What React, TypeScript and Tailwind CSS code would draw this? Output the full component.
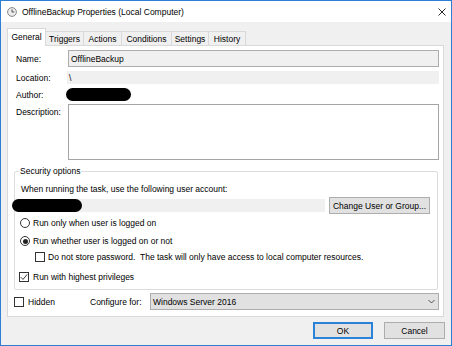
import React from "react";

const TABS = [
  { label: "General", w: "w-[39px]" },
  { label: "Triggers", w: "w-[38px]" },
  { label: "Actions", w: "w-[38px]" },
  { label: "Conditions", w: "w-[50px]" },
  { label: "Settings", w: "w-[37px]" },
  { label: "History", w: "w-[37px]" },
];

function Check({ checked = false }: { checked?: boolean }) {
  return (
    <span className="flex h-[10px] w-[10px] shrink-0 items-center justify-center border border-[#333] bg-white">
      {checked && (
        <svg width="8" height="8" viewBox="0 0 8 8">
          <polyline points="0.8,4.2 3,6.4 7.2,1.4" fill="none" stroke="#222" strokeWidth="0.9" />
        </svg>
      )}
    </span>
  );
}

function Radio({ checked = false }: { checked?: boolean }) {
  return (
    <span className="flex h-[10px] w-[10px] shrink-0 items-center justify-center rounded-full border border-[#333] bg-white">
      {checked && <span className="h-[5px] w-[5px] rounded-full bg-[#222]" />}
    </span>
  );
}

function TaskIcon() {
  return (
    <svg width="10" height="10" viewBox="0 0 10 10">
      <circle cx="5" cy="5" r="4.4" fill="#ececec" stroke="#7a7a7a" strokeWidth="0.9" />
      <path d="M5 2.4 V5 H7.2" fill="none" stroke="#444" strokeWidth="0.9" />
    </svg>
  );
}

export default function App() {
  return (
    <div className="flex h-[346px] w-[452px] flex-col border border-[#2b80d6] bg-[#f0f0f0] font-['Liberation_Sans',Arial,sans-serif] text-[8.5px] leading-[10px] text-black">
      {/* Title bar */}
      <div className="flex h-[21px] shrink-0 items-center bg-white pl-[6px] pr-[5px]">
        <TaskIcon />
        <span className="ml-[5px]">OfflineBackup Properties (Local Computer)</span>
        <svg className="ml-auto" width="8" height="8" viewBox="0 0 8 8">
          <path d="M0.5 0.5 L7.5 7.5 M7.5 0.5 L0.5 7.5" stroke="#111" strokeWidth="0.9" />
        </svg>
      </div>

      {/* Tabs */}
      <div className="mt-[6px] flex h-[17px] items-end pl-[6px]">
        {TABS.map((t, i) =>
          i === 0 ? (
            <div
              key={t.label}
              className={`relative z-10 mb-[-1px] flex h-[18px] ${t.w} items-center justify-center border border-b-0 border-[#d9d9d9] bg-white pb-[2px]`}
            >
              {t.label}
            </div>
          ) : (
            <div
              key={t.label}
              className={`flex h-[14px] ${t.w} items-center justify-center border-t border-r border-[#d9d9d9] bg-[#f0f0f0]`}
            >
              {t.label}
            </div>
          )
        )}
      </div>

      {/* Panel */}
      <div className="ml-[6px] flex h-[272px] w-[437px] shrink-0 flex-col border border-[#d9d9d9] bg-white">
        <div className="ml-[8px] mt-[4px] grid grid-cols-[52px_371px] gap-y-[4px]">
          <span className="self-center">Name:</span>
          <div className="flex h-[17px] items-center border border-[#adadad] bg-[#f0f0f0] pl-[2px]">OfflineBackup</div>

          <span className="self-center">Location:</span>
          <div className="-ml-px flex h-[13px] items-center bg-[#f0f0f0] pl-[2px]">\</div>

          <span className="self-center">Author:</span>
          <div className="flex h-[13px] items-center">
            <span className="-ml-[2px] h-[13px] w-[65px] rounded-full bg-black" />
          </div>

          <span className="-mt-px pt-[3px]">Description:</span>
          <div className="-mt-px h-[56px] border border-[#a5a5a5] bg-white" />
        </div>

        {/* Security options */}
        <fieldset className="ml-[6px] mt-[6px] w-[424px] rounded-[2px] border border-[#dcdcdc] pb-[7px]">
          <legend className="ml-[4px] px-[1px] leading-[10px]">Security options</legend>
          <div className="ml-[6px] mt-[8px]">When running the task, use the following user account:</div>
          <div className="mt-[3px] flex h-[17px] items-center">
            <div className="ml-[6px] flex h-[13px] w-[304px] items-center bg-[#f0f0f0]">
              <span className="-ml-[9px] h-[13px] w-[70px] rounded-full bg-black" />
            </div>
            <div className="ml-[4px] flex h-[17px] w-[101px] items-center justify-center border border-[#adadad] bg-[#e1e1e1]">
              Change User or Group...
            </div>
          </div>
          <label className="ml-[5px] mt-[4px] flex items-center gap-[3px]">
            <Radio />
            <span>Run only when user is logged on</span>
          </label>
          <label className="ml-[5px] mt-[8px] flex items-center gap-[3px]">
            <Radio checked />
            <span>Run whether user is logged on or not</span>
          </label>
          <label className="ml-[20px] mt-[6px] flex items-center gap-[3px]">
            <Check />
            <span>Do not store password.&nbsp; The task will only have access to local computer resources.</span>
          </label>
          <label className="ml-[4px] mt-[10px] flex items-center gap-[4px]">
            <Check checked />
            <span>Run with highest privileges</span>
          </label>
        </fieldset>

        {/* Hidden / Configure for */}
        <div className="ml-[6px] mt-[3px] flex h-[17px] items-center">
          <label className="flex w-[76px] items-center gap-[4px]">
            <Check />
            <span>Hidden</span>
          </label>
          <span className="w-[60px]">Configure for:</span>
          <div className="flex h-[17px] w-[289px] items-center border border-[#adadad] bg-[#e1e1e1] pl-[2px] pr-[3px]">
            <span>Windows Server 2016</span>
            <svg className="ml-auto" width="7" height="5" viewBox="0 0 7 5">
              <polyline points="0.5,1 3.5,4 6.5,1" fill="none" stroke="#444" strokeWidth="0.9" />
            </svg>
          </div>
        </div>
      </div>

      {/* Buttons */}
      <div className="mt-[5px] flex justify-end gap-[11px] pr-[6px]">
        <button className="flex h-[17px] w-[60px] items-center justify-center border-2 border-[#2a83d8] bg-[#e1e1e1]">
          OK
        </button>
        <button className="flex h-[17px] w-[61px] items-center justify-center border border-[#adadad] bg-[#e1e1e1]">
          Cancel
        </button>
      </div>
    </div>
  );
}
